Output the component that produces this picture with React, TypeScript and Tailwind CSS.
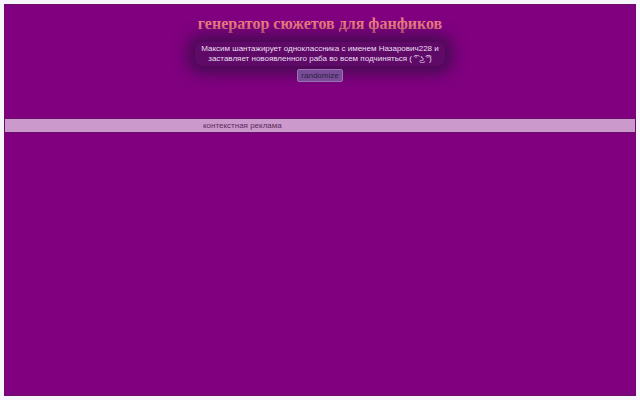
export default function App() {
  return (
    <div className="h-[400px] w-[640px] bg-[#f8f6fc] p-1 font-['Liberation_Sans',Arial,sans-serif]">
      <div className="flex h-[392px] flex-col border border-[#6e0a6e] bg-[#800080]">
        <div className="flex flex-col items-center pt-[9px]">
          <h1 className="font-['Liberation_Serif',serif] text-[16px] leading-[20px] font-bold text-[#f08080]">
            генератор сюжетов для фанфиков
          </h1>
          <div className="mt-[8px] w-[250px] rounded-lg bg-[#600a68] px-1 py-[2px] text-center text-[8px] leading-[10px] text-[#e8dff0] shadow-[0_0_14px_8px_#4a0a55]">
            Максим шантажирует одноклассника с именем Назарович228 и заставляет
            новоявленного раба во всем подчиняться ( ͡° ͜ʖ ͡°)
          </div>
          <button className="mt-[3px] h-[13px] rounded-[2px] border border-[#9a72b0] bg-[#7a4c98] px-[3px] text-[8px] leading-[11px] text-[#2a2040]">
            randomize
          </button>
        </div>
        <div className="mt-[36px] flex h-[15px] items-center border-y border-[#6a106a] bg-[#cc99cc] pl-[198px] text-[8px] text-[#5a2a5a]">
          контекстная реклама
        </div>
      </div>
    </div>
  );
}
